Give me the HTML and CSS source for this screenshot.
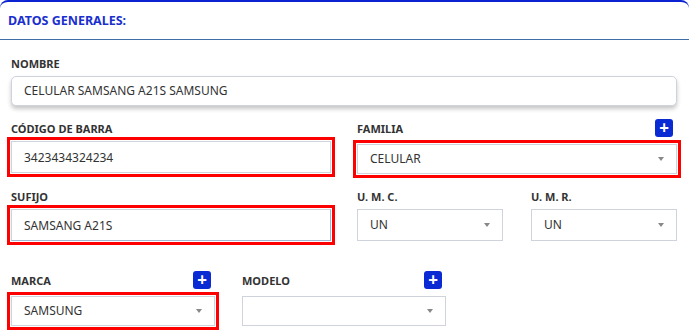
FILE: index.html
```html
<!DOCTYPE html>
<html>
	<head>
		<meta charset="UTF-8">
		<title>Datos generales</title>
		<link rel="stylesheet" href="styles.css">
	</head>
	<body>
		<div class="card">
			<div class="card-head">DATOS GENERALES:</div>
			<div class="card-body">
				<div class="row">
					<div class="field">
						<div class="label-row"><label>NOMBRE</label></div>
						<input class="ctl ctl-shadow" type="text" value="CELULAR SAMSANG A21S SAMSUNG">
					</div>
				</div>
				<div class="row row-2">
					<div class="field">
						<div class="label-row"><label>CÓDIGO DE BARRA</label></div>
						<input class="ctl mark" type="text" value="3423434324234">
					</div>
					<div class="field">
						<div class="label-row"><label>FAMILIA</label><span class="plus">+</span></div>
						<div class="ctl select mark low">CELULAR<i class="arrow"></i></div>
					</div>
				</div>
				<div class="row row-2">
					<div class="field">
						<div class="label-row"><label>SUFIJO</label></div>
						<input class="ctl mark focus" type="text" value="SAMSANG A21S">
					</div>
					<div class="row row-2 inner">
						<div class="field">
							<div class="label-row"><label>U. M. C.</label></div>
							<div class="ctl select">UN<i class="arrow"></i></div>
						</div>
						<div class="field">
							<div class="label-row"><label>U. M. R.</label></div>
							<div class="ctl select">UN<i class="arrow"></i></div>
						</div>
					</div>
				</div>
				<div class="row row-3 last">
					<div class="field">
						<div class="label-row"><label>MARCA</label><span class="plus">+</span></div>
						<div class="ctl select mark low">SAMSUNG<i class="arrow"></i></div>
					</div>
					<div class="field">
						<div class="label-row"><label>MODELO</label><span class="plus">+</span></div>
						<div class="ctl select low"><i class="arrow"></i></div>
					</div>
					<div class="field"></div>
				</div>
			</div>
		</div>
	</body>
</html>
```

FILE: styles.css
```css
*{
	margin: 0;
	padding: 0;
	box-sizing: border-box;
}
body{
	font-family: "Noto Sans", "Open Sans", sans-serif;
	background: #fff;
	color: #333;
}
.card{
	border-top: 2px solid #0a22d2;
	border-radius: 8px 8px 0 0;
	height: 336px;
	overflow: hidden;
}
.card-head{
	height: 38px;
	line-height: 38px;
	padding-left: 8px;
	border-bottom: 1px solid #3e6ea6;
	color: #1a2fcf;
	font-size: 12.5px;
	font-weight: bold;
}
.card-body{
	padding: 15px 12px 0 11px;
}
.row{
	display: grid;
	grid-template-columns: 1fr;
	margin-bottom: 14px;
}
.row-2{
	grid-template-columns: 1fr 1fr;
	column-gap: 26px;
}
.row-2.inner{
	column-gap: 28px;
	margin-bottom: 0;
}
.row-3{
	grid-template-columns: 1fr 1fr 1fr;
	column-gap: 27px;
}
.last{
	margin-top: 31px;
}
.field{
	display: flex;
	flex-direction: column;
}
.label-row{
	display: flex;
	justify-content: space-between;
	align-items: flex-start;
	height: 17px;
	margin-bottom: 4px;
}
.label-row label{
	font-size: 11px;
	font-weight: bold;
	color: #333;
	line-height: 17px;
}
.plus{
	width: 18px;
	height: 18px;
	margin-right: 4px;
	margin-top: -1px;
	background: #0a2bd4;
	border-radius: 3px;
	color: #fff;
	font-size: 17px;
	font-weight: bold;
	line-height: 17px;
	text-align: center;
}
.ctl{
	display: block;
	width: 100%;
	height: 32px;
	padding: 0 12px;
	border: 1px solid #cfd3dc;
	background: #fff;
	font-family: inherit;
	font-size: 12px;
	color: #333;
	line-height: 30px;
	outline: none;
}
.ctl-shadow{
	height: 30px;
	border-radius: 5px;
	box-shadow: 0 3px 4px rgba(0,0,0,0.22);
}
.mark{
	outline: 3px solid #f00;
	outline-offset: 1px;
}
.focus{
	border-right-color: #9fb6d2;
	border-bottom-color: #9fb6d2;
}
.select{
	position: relative;
}
.low{
	height: 30px;
	margin-top: 3px;
	line-height: 28px;
}
.arrow{
	position: absolute;
	right: 12px;
	top: 50%;
	margin-top: -2px;
	border-left: 3px solid transparent;
	border-right: 3px solid transparent;
	border-top: 4px solid #888;
}
```
